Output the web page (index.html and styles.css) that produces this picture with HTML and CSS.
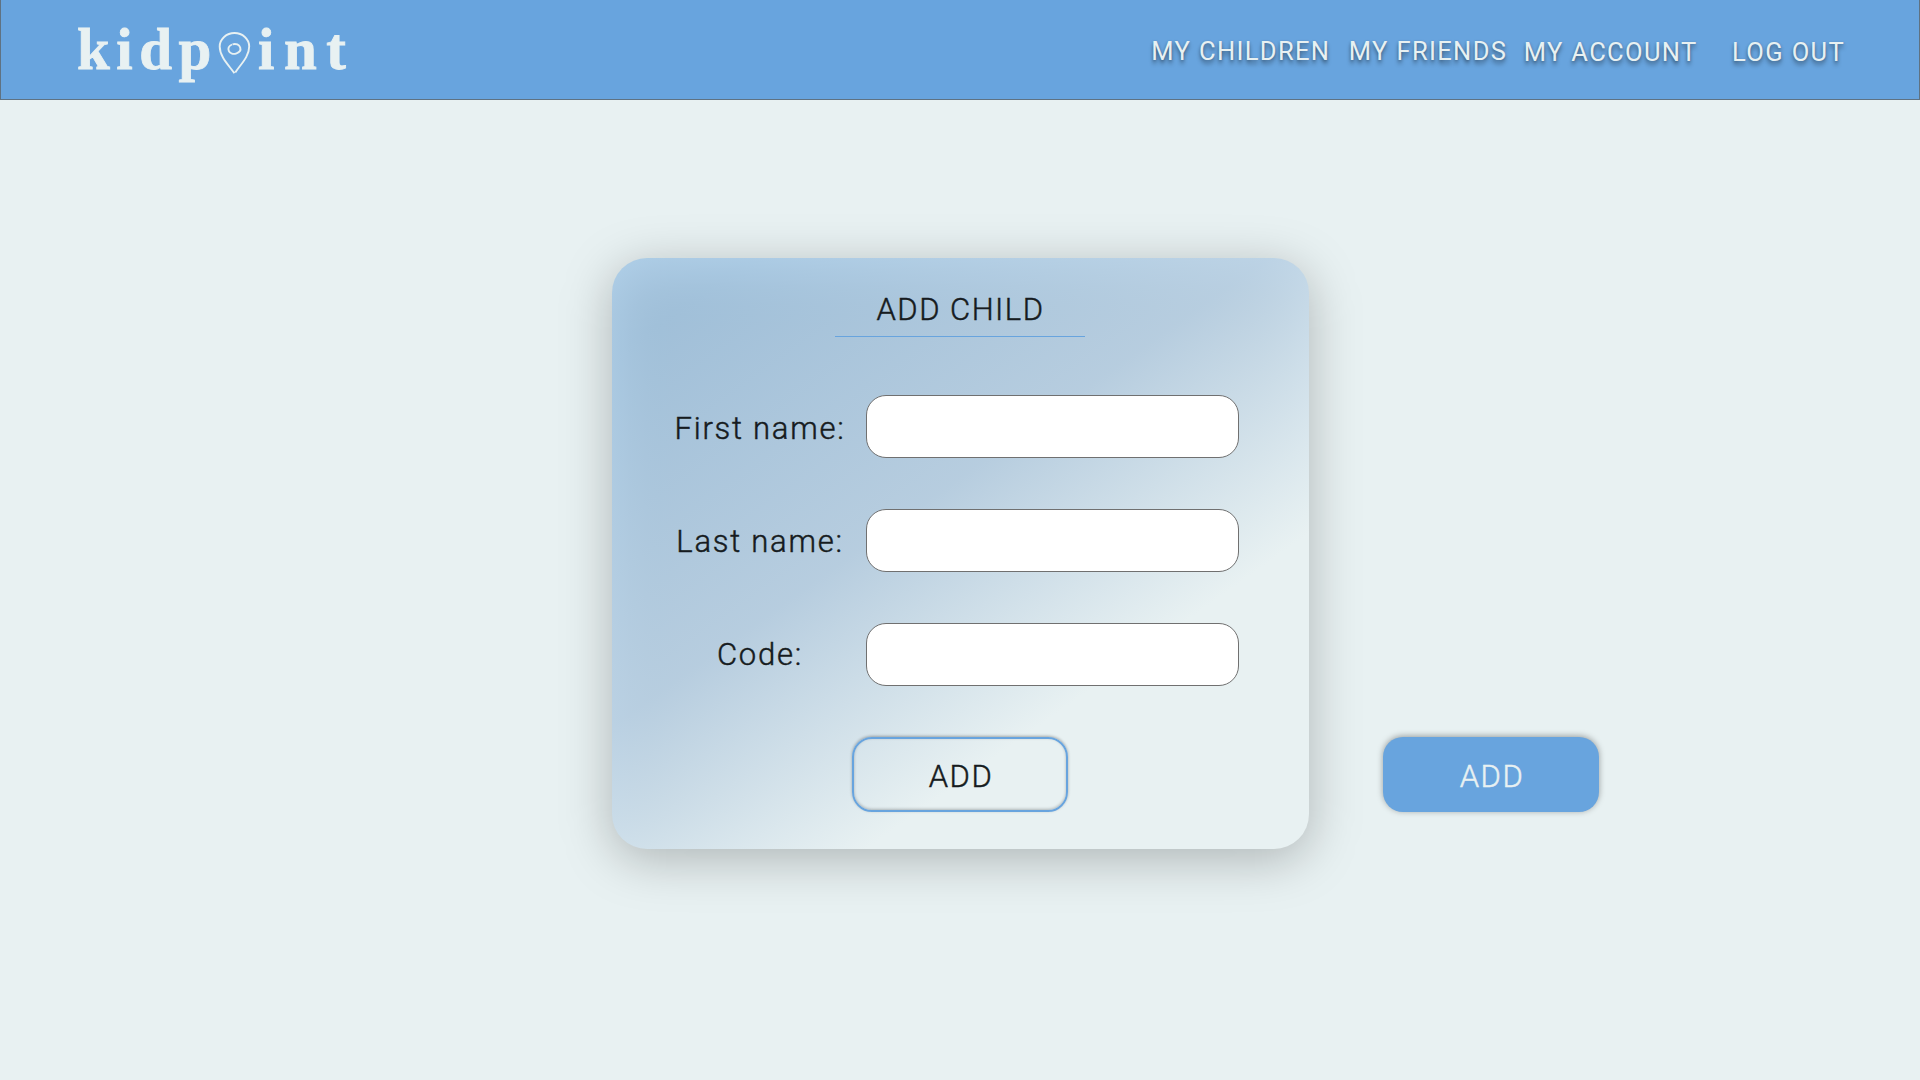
FILE: index.html
```html
<!DOCTYPE html>
<html lang="en">
<head>
<meta charset="utf-8">
<title>kidpoint</title>
<link rel="stylesheet" href="styles.css">
</head>
<body>
<header class="header">
  <div class="logo">
    <span class="logo-start">kidp</span>
    <svg class="logo-pin" width="33" height="44" viewBox="0 0 33 44" fill="none" stroke="currentColor" stroke-width="1.9">
      <path d="M16.4 42.2 C11 34.500 1.700 26 1.700 15.500 C1.700 8 8.500 2 16.500 2 C24.500 2 31.200 8 31.200 15.500 C31.200 26 22 34 17.300 41.500"/>
      <path d="M14 13.500 C10.500 15 9.800 17.500 10.800 19.800 C12 22.800 15.500 23.500 18.500 22.300 C21.500 21.300 23 19 22.200 16.500 C21.300 13.800 18 12.200 14.500 13.300"/>
    </svg>
    <span class="logo-end">int</span>
  </div>
  <nav class="nav">
    <a class="nav-link">MY CHILDREN</a>
    <a class="nav-link nav-friends">MY FRIENDS</a>
    <a class="nav-link nav-account">MY ACCOUNT</a>
    <a class="nav-link nav-logout">LOG OUT</a>
  </nav>
</header>
<main class="main">
  <form class="card">
    <h1 class="title">ADD CHILD</h1>
    <div class="fields">
      <div class="labels">
        <label class="label" for="first">First name:</label>
        <label class="label" for="last">Last name:</label>
        <label class="label" for="code">Code:</label>
      </div>
      <div class="inputs">
        <input class="input" id="first" type="text">
        <input class="input" id="last" type="text">
        <input class="input" id="code" type="text">
      </div>
    </div>
    <button class="button button-outline" type="button">ADD</button>
  </form>
  <button class="button button-filled" type="button">ADD</button>
</main>
</body>
</html>
```
FILE: styles.css
```css
* { box-sizing: border-box; }
body {
  margin: 0;
  height: 1080px;
  background: #e8f1f2;
  color: #161b20;
  font-family: Roboto, sans-serif;
  overflow: hidden;
}
.header {
  height: 100px;
  padding: 0 74px 0 76px;
  display: flex;
  justify-content: space-between;
  background: #68a4de;
  border: 1px solid #5f7282;
  border-top: 0;
  color: #e8f1f2;
}
.logo {
  display: flex;
  align-items: flex-start;
  font: bold 59px/68px "Liberation Serif", serif;
  padding-top: 15px;
  color: #e8f1f2;
  -webkit-text-stroke: .8px #e8f1f2;
}
.logo-start { letter-spacing: 6.500px; width: 141px; }
.logo-pin { margin-top: 16px; }
.logo-end { letter-spacing: 9.500px; margin-left: 7px; width: 96px; }
.nav { display: flex; padding-top: 36px; }
.nav-link {
  font-size: 25.500px;
  line-height: 30px;
  letter-spacing: 1.350px;
  text-shadow: 0 4px 4px rgba(0, 0, 0, .35), 0 1px 3px rgba(0, 0, 0, .25);
  white-space: nowrap;
}
.nav-friends { margin-left: 18.500px; }
.nav-account { margin-left: 16.500px; padding-top: 1px; }
.nav-logout { margin-left: 34.500px; padding-top: 1px; }
.main {
  display: flex;
  align-items: flex-start;
  gap: 74px;
  padding: 158px 0 0 612px;
}
.card {
  position: relative;
  isolation: isolate;
  flex: none;
  width: 697px;
  height: 591px;
  padding-top: 32px;
  display: flex;
  flex-direction: column;
  align-items: center;
}
.card::before,
.card::after {
  content: "";
  position: absolute;
  inset: 0;
  z-index: -1;
  border-radius: 35px;
}
.card::before {
  top: 10px;
  bottom: -10px;
  background: rgba(0, 0, 0, .25);
  filter: blur(25px);
}
.card::after {
  background: linear-gradient(144.500deg, rgba(155, 196, 231, .71) 9%, rgba(184, 209, 230, .86) 43%, #e8f1f2 71%);
}
.title {
  margin: 0 1px 0 0;
  width: 250px;
  height: 47px;
  border-bottom: 1px solid #68a4de;
  text-align: center;
  font-size: 31px;
  font-weight: 300;
  line-height: 40px;
  letter-spacing: 1.500px;
  text-indent: 1px;
  -webkit-text-stroke: .45px currentColor;
}
.fields {
  align-self: stretch;
  display: grid;
  grid-template-columns: 212px 373px;
  padding: 58px 0 0 42px;
}
.labels { display: flex; flex-direction: column; padding-top: 16px; gap: 77px; }
.label {
  text-align: center;
  font-size: 31px;
  font-weight: 300;
  line-height: 36px;
  letter-spacing: 1.750px;
  -webkit-text-stroke: .45px currentColor;
}
.inputs { display: flex; flex-direction: column; gap: 51px; }
.input {
  width: 373px;
  height: 63px;
  padding: 0 20px;
  border: 1px solid #707070;
  border-radius: 20px;
  background: #fff;
  font: 30px Roboto, sans-serif;
}
.button {
  flex: none;
  width: 216px;
  height: 75px;
  padding: 4px 0 0 2px;
  border-radius: 20px;
  font: 300 31px Roboto, sans-serif;
  letter-spacing: 1.500px;
  -webkit-text-stroke: .45px currentColor;
}
.button-outline {
  margin: 51px 1px 0 0;
  border: 2px solid #68a4de;
  background: transparent;
  color: #161b20;
  box-shadow: 0 -1px 3px rgba(0, 0, 0, .3), inset 0 -1px 3px rgba(0, 0, 0, .25);
}
.button-filled {
  margin-top: 479px;
  border: 0;
  background: #68a4de;
  color: #e8f1f2;
  box-shadow: 0 -1px 6px rgba(0, 0, 0, .35);
}
```
